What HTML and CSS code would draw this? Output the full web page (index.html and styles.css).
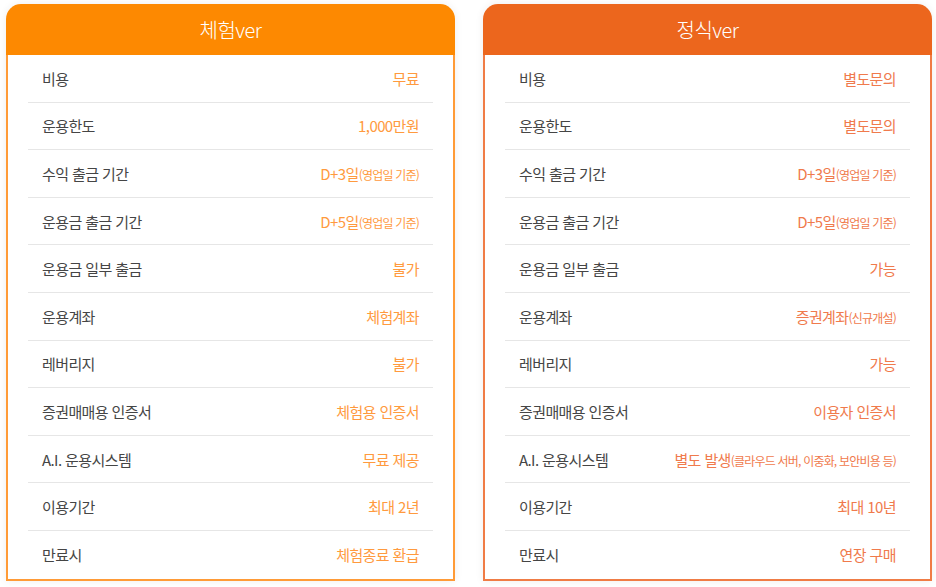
FILE: index.html
```html
<!DOCTYPE html>
<html lang="ko">
<head>
<meta charset="utf-8">
<link rel="stylesheet" href="styles.css">
</head>
<body>
<div class="wrap">
  <section class="card trial">
    <h2 class="card-head">체험ver</h2>
    <ul class="card-body">
      <li class="row"><span class="label">비용</span><span class="value">무료</span></li>
      <li class="row"><span class="label">운용한도</span><span class="value">1,000만원</span></li>
      <li class="row"><span class="label">수익 출금 기간</span><span class="value">D+3일<small>(영업일 기준)</small></span></li>
      <li class="row"><span class="label">운용금 출금 기간</span><span class="value">D+5일<small>(영업일 기준)</small></span></li>
      <li class="row"><span class="label">운용금 일부 출금</span><span class="value">불가</span></li>
      <li class="row"><span class="label">운용계좌</span><span class="value">체험계좌</span></li>
      <li class="row"><span class="label">레버리지</span><span class="value">불가</span></li>
      <li class="row"><span class="label">증권매매용 인증서</span><span class="value">체험용 인증서</span></li>
      <li class="row"><span class="label">A.I. 운용시스템</span><span class="value">무료 제공</span></li>
      <li class="row"><span class="label">이용기간</span><span class="value">최대 2년</span></li>
      <li class="row"><span class="label">만료시</span><span class="value">체험종료 환급</span></li>
    </ul>
  </section>
  <section class="card full">
    <h2 class="card-head">정식ver</h2>
    <ul class="card-body">
      <li class="row"><span class="label">비용</span><span class="value">별도문의</span></li>
      <li class="row"><span class="label">운용한도</span><span class="value">별도문의</span></li>
      <li class="row"><span class="label">수익 출금 기간</span><span class="value">D+3일<small>(영업일 기준)</small></span></li>
      <li class="row"><span class="label">운용금 출금 기간</span><span class="value">D+5일<small>(영업일 기준)</small></span></li>
      <li class="row"><span class="label">운용금 일부 출금</span><span class="value">가능</span></li>
      <li class="row"><span class="label">운용계좌</span><span class="value">증권계좌<small>(신규개설)</small></span></li>
      <li class="row"><span class="label">레버리지</span><span class="value">가능</span></li>
      <li class="row"><span class="label">증권매매용 인증서</span><span class="value">이용자 인증서</span></li>
      <li class="row"><span class="label">A.I. 운용시스템</span><span class="value">별도 발생<small>(클라우드 서버, 이중화, 보안비용 등)</small></span></li>
      <li class="row"><span class="label">이용기간</span><span class="value">최대 10년</span></li>
      <li class="row"><span class="label">만료시</span><span class="value">연장 구매</span></li>
    </ul>
  </section>
</div>
</body>
</html>
```

FILE: styles.css
```css
html, body {
  margin: 0;
  padding: 0;
  background: #ffffff;
}
body {
  font-family: "Noto Sans CJK KR", "Noto Sans", sans-serif;
  width: 936px;
  height: 587px;
  overflow: hidden;
}
.wrap {
  display: flex;
  gap: 28px;
  padding: 4px 0 0 6px;
}
.card {
  width: 449px;
  box-shadow: 0 0 8px rgba(0, 0, 0, 0.07);
  border-radius: 15px 15px 0 0;
}
.card-head {
  margin: 0;
  height: 50px;
  padding-bottom: 1px;
  border-radius: 15px 15px 0 0;
  color: #ffffff;
  font-size: 20px;
  font-weight: 300;
  letter-spacing: -0.5px;
  display: flex;
  align-items: center;
  justify-content: center;
}
.trial .card-head { background: #fd8901; }
.full .card-head { background: #ec661d; }
.card-body {
  list-style: none;
  margin: 0;
  padding: 0 20px;
  border: 2px solid;
  border-top: none;
  background: #ffffff;
}
.trial .card-body { border-color: #ff9b37; }
.full .card-body { border-color: #f07c45; }
.row {
  height: 47.6px;
  box-sizing: border-box;
  display: flex;
  align-items: center;
  justify-content: space-between;
  padding: 0 14px;
  border-bottom: 1px solid #e6e6e6;
}
.row:last-child { border-bottom: none; }
.label {
  font-size: 15px;
  font-weight: 400;
  color: #454545;
  letter-spacing: -0.6px;
}
.value {
  font-size: 15px;
  font-weight: 400;
  letter-spacing: -0.6px;
}
.value small {
  font-size: 12px;
  letter-spacing: -0.8px;
}
.trial .value { color: #ff9a3e; }
.full .value { color: #f07a4c; }
```
